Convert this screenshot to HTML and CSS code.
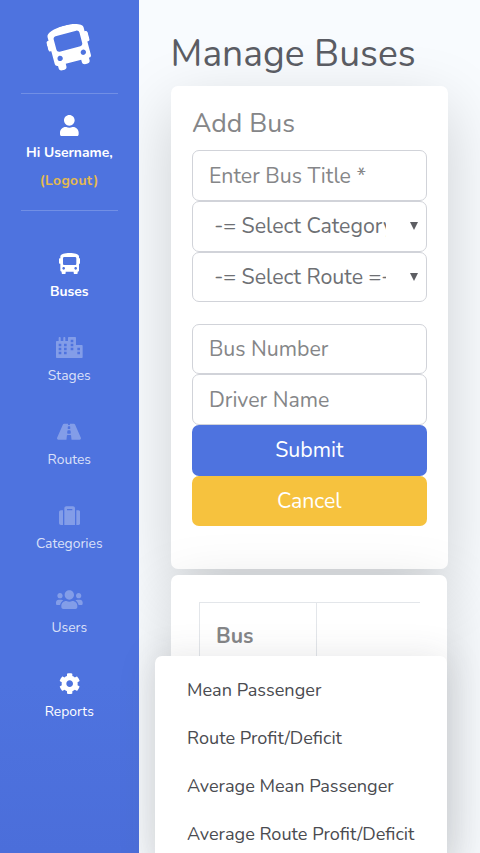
FILE: index.html
```html
<!DOCTYPE html>
<html lang="en">
  <head>
    <meta charset="UTF-8" />
    <meta name="viewport" content="width=device-width, initial-scale=1.0" />
    <title>Manage Buses</title>
    <link rel="stylesheet" href="styles.css">
  </head>
  <body>
    <div class="wrapper">
      <nav class="sidebar">
        <a class="brand" href="#">
          <svg class="brand-icon" viewBox="0 0 512 512"><path d="M488 128h-8V80c0-44.8-99.2-80-224-80S32 35.2 32 80v48h-8c-13.25 0-24 10.74-24 24v80c0 13.25 10.75 24 24 24h8v160c0 17.67 14.33 32 32 32v32c0 17.67 14.33 32 32 32h32c17.67 0 32-14.33 32-32v-32h192v32c0 17.67 14.33 32 32 32h32c17.67 0 32-14.33 32-32v-32h6.4c16 0 25.6-12.8 25.6-25.6V256h8c13.25 0 24-10.75 24-24v-80c0-13.26-10.75-24-24-24zM112 400c-17.67 0-32-14.33-32-32s14.33-32 32-32 32 14.33 32 32-14.33 32-32 32zm16-112c-17.67 0-32-14.33-32-32V128c0-17.67 14.33-32 32-32h256c17.67 0 32 14.33 32 32v128c0 17.67-14.33 32-32 32H128zm272 112c-17.67 0-32-14.33-32-32s14.33-32 32-32 32 14.33 32 32-14.33 32-32 32z"/></svg>
        </a>
        <hr class="divider">
        <div class="user">
          <svg class="icon" viewBox="0 0 448 512"><path d="M224 256c70.7 0 128-57.3 128-128S294.7 0 224 0 96 57.3 96 128s57.3 128 128 128zm89.6 32h-16.7c-22.2 10.2-46.9 16-72.9 16s-50.6-5.8-72.9-16h-16.7C60.2 288 0 348.2 0 422.4V464c0 26.5 21.5 48 48 48h352c26.5 0 48-21.5 48-48v-41.6c0-74.2-60.2-134.4-134.4-134.4z"/></svg>
          <span class="user-name">Hi Username,</span>
          <a class="logout" href="#">(Logout)</a>
        </div>
        <hr class="divider">
        <ul class="nav">
          <li class="nav-item active">
            <svg class="icon" viewBox="0 0 512 512"><path d="M488 128h-8V80c0-44.8-99.2-80-224-80S32 35.2 32 80v48h-8c-13.25 0-24 10.74-24 24v80c0 13.25 10.75 24 24 24h8v160c0 17.67 14.33 32 32 32v32c0 17.67 14.33 32 32 32h32c17.67 0 32-14.33 32-32v-32h192v32c0 17.67 14.33 32 32 32h32c17.67 0 32-14.33 32-32v-32h6.4c16 0 25.6-12.8 25.6-25.6V256h8c13.25 0 24-10.75 24-24v-80c0-13.26-10.75-24-24-24zM112 400c-17.67 0-32-14.33-32-32s14.33-32 32-32 32 14.33 32 32-14.33 32-32 32zm16-112c-17.67 0-32-14.33-32-32V128c0-17.67 14.33-32 32-32h256c17.67 0 32 14.33 32 32v128c0 17.67-14.33 32-32 32H128zm272 112c-17.67 0-32-14.33-32-32s14.33-32 32-32 32 14.33 32 32-14.33 32-32 32z"/></svg>
            <span>Buses</span>
          </li>
          <li class="nav-item">
            <svg class="icon" viewBox="0 0 640 512"><path fill-rule="evenodd" d="M616 192H480V24c0-13.26-10.74-24-24-24H312c-13.26 0-24 10.74-24 24v72h-64V16c0-8.84-7.16-16-16-16h-16c-8.84 0-16 7.16-16 16v80h-64V16c0-8.84-7.16-16-16-16H80c-8.84 0-16 7.16-16 16v80H24c-13.26 0-24 10.74-24 24v360c0 17.67 14.33 32 32 32h576c17.67 0 32-14.33 32-32V216c0-13.26-10.75-24-24-24zM64 160h64v64H64zM64 256h64v64H64zM64 352h64v64H64zM192 160h64v64h-64zM192 256h64v64h-64zM192 352h64v64h-64zM352 64h64v64h-64zM352 160h64v64h-64zM352 256h64v64h-64zM512 256h64v64h-64zM512 352h64v64h-64z"/></svg>
            <span>Stages</span>
          </li>
          <li class="nav-item">
            <svg class="icon" viewBox="0 0 576 512"><path d="M573.19 402.67l-139.79-320C428.43 71.29 417.6 64 405.68 64h-97.59l2.45 23.16c.5 4.72-3.21 8.84-7.96 8.84h-29.16c-4.75 0-8.46-4.12-7.96-8.84L267.91 64h-97.59c-11.93 0-22.76 7.29-27.73 18.67L2.8 402.67C-6.45 423.86 8.31 448 30.54 448h196.84l10.31-97.68c.86-8.14 7.72-14.32 15.91-14.32h68.8c8.19 0 15.05 6.18 15.91 14.32L348.62 448h196.84c22.23 0 36.99-24.14 27.73-45.33zM260.4 135.16a8 8 0 0 1 7.96-7.16h39.29c4.09 0 7.53 3.09 7.96 7.16l4.6 43.58c.75 7.09-4.81 13.26-11.93 13.26h-40.54c-7.13 0-12.68-6.17-11.93-13.26l4.59-43.58zM315.64 304h-55.29c-9.5 0-16.91-8.23-15.91-17.68l5.07-48c.86-8.14 7.72-14.32 15.91-14.32h45.15c8.19 0 15.05 6.18 15.91 14.32l5.07 48c1 9.45-6.41 17.68-15.91 17.68z"/></svg>
            <span>Routes</span>
          </li>
          <li class="nav-item">
            <svg class="icon" viewBox="0 0 512 512"><path d="M128 480h256V80c0-26.5-21.5-48-48-48H176c-26.5 0-48 21.5-48 48v400zm64-384h128v32H192V96zm320 80v256c0 26.5-21.5 48-48 48h-48V128h48c26.5 0 48 21.5 48 48zM96 480H48c-26.5 0-48-21.5-48-48V176c0-26.5 21.5-48 48-48h48v352z"/></svg>
            <span>Categories</span>
          </li>
          <li class="nav-item">
            <svg class="icon" viewBox="0 0 640 512"><path d="M96 224c35.3 0 64-28.7 64-64s-28.7-64-64-64-64 28.7-64 64 28.7 64 64 64zm448 0c35.3 0 64-28.7 64-64s-28.7-64-64-64-64 28.7-64 64 28.7 64 64 64zm32 32h-64c-17.6 0-33.5 7.1-45.1 18.6 40.3 22.1 68.9 62 75.1 109.4h66c17.7 0 32-14.3 32-32v-32c0-35.3-28.7-64-64-64zm-256 0c61.9 0 112-50.1 112-112S381.9 32 320 32 208 82.1 208 144s50.1 112 112 112zm76.8 32h-8.3c-20.8 10-43.9 16-68.5 16s-47.6-6-68.5-16h-8.3C179.6 288 128 339.6 128 403.2V432c0 26.5 21.5 48 48 48h288c26.5 0 48-21.5 48-48v-28.8c0-63.6-51.6-115.2-115.2-115.2zm-223.7-13.4C161.5 263.1 145.6 256 128 256H64c-35.3 0-64 28.7-64 64v32c0 17.7 14.3 32 32 32h65.9c6.3-47.4 34.9-87.3 75.2-109.4z"/></svg>
            <span>Users</span>
          </li>
          <li class="nav-item open">
            <svg class="icon" viewBox="0 0 512 512"><path d="M487.4 315.7l-42.6-24.6c4.3-23.2 4.3-47 0-70.2l42.6-24.6c4.9-2.8 7.1-8.6 5.5-14-11.1-35.6-30-67.8-54.7-94.6-3.8-4.1-10-5.1-14.8-2.3L380.8 110c-17.9-15.4-38.5-27.3-60.8-35.1V25.8c0-5.6-3.9-10.5-9.4-11.7-36.7-8.2-74.3-7.8-109.2 0-5.5 1.2-9.4 6.1-9.4 11.7V75c-22.2 7.9-42.8 19.8-60.8 35.1L88.7 85.5c-4.9-2.8-11-1.9-14.8 2.3-24.7 26.7-43.6 58.9-54.7 94.6-1.7 5.4.6 11.2 5.5 14L67.3 221c-4.3 23.2-4.3 47 0 70.2l-42.6 24.6c-4.9 2.8-7.1 8.6-5.5 14 11.1 35.6 30 67.8 54.7 94.6 3.8 4.1 10 5.1 14.8 2.3l42.6-24.6c17.9 15.4 38.5 27.3 60.8 35.1v49.2c0 5.6 3.9 10.5 9.4 11.7 36.7 8.2 74.3 7.8 109.2 0 5.5-1.2 9.4-6.1 9.4-11.7v-49.2c22.2-7.9 42.8-19.8 60.8-35.1l42.6 24.6c4.9 2.8 11 1.9 14.8-2.3 24.7-26.7 43.6-58.9 54.7-94.6 1.5-5.5-.7-11.3-5.6-14.1zM256 336c-44.1 0-80-35.9-80-80s35.9-80 80-80 80 35.9 80 80-35.9 80-80 80z"/></svg>
            <span>Reports</span>
            <div class="dropdown">
              <a href="#">Mean Passenger</a>
              <a href="#">Route Profit/Deficit</a>
              <a href="#">Average Mean Passenger</a>
              <a href="#">Average Route Profit/Deficit</a>
            </div>
          </li>
        </ul>
      </nav>
      <main class="content">
        <h1>Manage Buses</h1>
        <form class="card card-form">
          <h2>Add Bus</h2>
          <input class="control" type="text" placeholder="Enter Bus Title *">
          <div class="select">
            <select class="control"><option>-= Select Category =-</option></select>
          </div>
          <div class="select select-route">
            <select class="control"><option>-= Select Route =-</option></select>
          </div>
          <input class="control" type="text" placeholder="Bus Number">
          <input class="control" type="text" placeholder="Driver Name">
          <button class="btn btn-primary" type="button">Submit</button>
          <button class="btn btn-warning" type="button">Cancel</button>
        </form>
        <div class="card card-table">
          <table>
            <tr><th>Bus</th><th></th></tr>
          </table>
        </div>
      </main>
    </div>
  </body>
</html>
```
FILE: styles.css
```css
* {
  box-sizing: border-box;
}
body {
  margin: 0;
  height: 853px;
  overflow: hidden;
  background: #f8fbfe;
  font-family: Nunito, Lato, sans-serif;
  font-size: 21.33px;
  color: #858688;
}
a {
  text-decoration: none;
}
.wrapper {
  display: flex;
  height: 853px;
  overflow: hidden;
}
.sidebar {
  position: relative;
  z-index: 2;
  flex: none;
  width: 138.6px;
  background: linear-gradient(#4e73df 80%, #4b6eda);
  color: #fff;
  text-align: center;
  font-size: 13.87px;
  line-height: 18px;
}
.brand {
  display: flex;
  justify-content: center;
  align-items: center;
  height: 93px;
}
.brand-icon {
  width: 42.67px;
  height: 42.67px;
  fill: #fff;
  transform: rotate(-15deg);
}
.divider {
  width: 97px;
  margin: 0 auto;
  border: 0;
  border-top: 1px solid rgba(255, 255, 255, 0.2);
}
.icon {
  display: block;
  height: 21.33px;
  margin: 0 auto;
  fill: rgba(255, 255, 255, 0.3);
}
.user {
  height: 116px;
  padding-top: 20.5px;
  font-weight: bold;
}
.user .icon {
  fill: #fff;
}
.user-name,
.logout {
  display: block;
}
.user-name {
  margin-top: 8px;
}
.logout {
  margin-top: 10px;
  letter-spacing: 0.35px;
  color: #f6c23e;
  opacity: 0.9;
}
.nav {
  list-style: none;
  margin: 0;
  padding: 26px 0 0;
}
.nav-item {
  position: relative;
  height: 84px;
  padding-top: 16px;
  color: rgba(255, 255, 255, 0.8);
}
.nav-item span {
  display: block;
  margin-top: 8.5px;
}
.nav-item.active {
  color: #fff;
  font-weight: bold;
}
.nav-item.active .icon,
.nav-item.open .icon {
  fill: #fff;
}
.nav-item.open {
  color: #fff;
}
.dropdown {
  position: absolute;
  left: 155px;
  top: -1px;
  width: 292px;
  height: 212px;
  padding-top: 10px;
  border-radius: 7px 7px 0 0;
  background: #fff;
  box-shadow: 0 3px 37px rgba(58, 59, 69, 0.15);
  text-align: left;
}
.dropdown a {
  display: block;
  padding-left: 32px;
  font-size: 18.13px;
  line-height: 48px;
  color: #4a4b50;
  white-space: nowrap;
}
.content {
  flex: 1;
  padding: 31px 32px 0 32px;
}
h1 {
  margin: 0;
  font-size: 37.2px;
  line-height: 45px;
  font-weight: 400;
  color: #5a5c63;
  white-space: nowrap;
}
.card {
  border-radius: 7px;
  background: #fff;
  box-shadow: 0 21px 64px rgba(0, 0, 0, 0.175);
}
.card-form {
  height: 483px;
  margin-top: 10.3px;
  padding: 21px 21.33px 0;
}
h2 {
  margin: 0 0 11.2px;
  font-size: 26.67px;
  line-height: 32px;
  font-weight: 400;
}
.control {
  display: block;
  width: 100%;
  height: 50.67px;
  padding: 0 16px;
  border: 1.5px solid #d1d3d9;
  border-radius: 7px;
  background: #fff;
  font: inherit;
  color: #6e7074;
}
.control::placeholder {
  color: #858688;
}
.select {
  position: relative;
}
.select .control {
  appearance: none;
  padding: 0 40px 0 21.3px;
}
.select::after {
  content: "";
  position: absolute;
  right: 9px;
  top: 21px;
  border: 4px solid transparent;
  border-top: 8px solid #5d5e63;
  border-bottom: 0;
}
.select-route {
  margin-bottom: 21.33px;
}
.btn {
  display: block;
  width: 100%;
  height: 50.67px;
  border: 0;
  border-radius: 7px;
  font: inherit;
  color: #fff;
}
.btn-primary {
  background: #4e73df;
}
.btn-warning {
  background: #f6c23e;
}
.card-table {
  height: 278px;
  margin: 6px 1px 0 0.5px;
  padding: 27px 27px 0 28px;
}
table {
  width: 100%;
  border-collapse: collapse;
}
th {
  height: 66px;
  padding: 0 16px;
  border: 1.33px solid #e3e6ea;
  border-right: 0;
  text-align: left;
}
th:first-child {
  width: 117px;
}
```
